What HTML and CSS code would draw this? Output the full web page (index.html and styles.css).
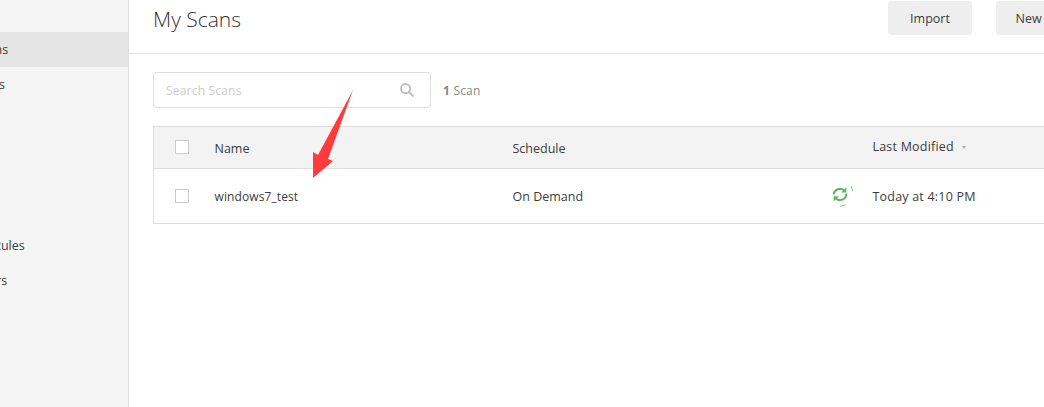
FILE: index.html
```html
<!DOCTYPE html>
<html lang="en">
<head>
    <meta charset="UTF-8">
    <title>My Scans</title>
    <link rel="stylesheet" href="styles.css">
</head>
<body>
    <div class="page">
        <div class="sidebar">
            <div class="side-group">
                <div class="side-item active">My Scans</div>
                <div class="side-item">All Scans</div>
            </div>
            <div class="side-group">
                <div class="side-item">Plugin Rules</div>
                <div class="side-item">Scanners</div>
            </div>
        </div>
        <div class="main">
            <div class="header">
                <h1>My Scans</h1>
                <div class="actions">
                    <button class="btn">Import</button>
                    <button class="btn btn-new">New Scan</button>
                </div>
            </div>
            <div class="content">
                <div class="toolbar">
                    <div class="search">
                        <span class="placeholder">Search Scans</span>
                        <svg class="search-icon" width="14" height="14" viewBox="0 0 14 14" fill="none" stroke="#bcbcbc" stroke-width="1.8">
                            <circle cx="5.6" cy="5.6" r="4.6"/>
                            <path d="M9 9l4.3 4.3"/>
                        </svg>
                    </div>
                    <div class="count"><strong>1</strong> Scan</div>
                </div>
                <table class="scans">
                    <thead>
                        <tr>
                            <th class="col-check raised"><span class="checkbox"></span></th>
                            <th class="col-name lowered">Name</th>
                            <th class="col-schedule lowered">Schedule</th>
                            <th class="col-status"></th>
                            <th class="col-modified raised">Last Modified<span class="caret"></span></th>
                        </tr>
                    </thead>
                    <tbody>
                        <tr>
                            <td class="col-check"><span class="checkbox"></span></td>
                            <td class="col-name scan-name">windows7_test</td>
                            <td class="col-schedule">On Demand</td>
                            <td class="col-status">
                                <svg width="24" height="26" viewBox="0 0 24 26" fill="none" stroke="#5cb85c">
                                    <path d="M2.6 11.5a6.4 6.4 0 0 1 10.6-4" stroke-width="2"/>
                                    <path d="M15.4 10.5a6.4 6.4 0 0 1-10.6 5" stroke-width="2"/>
                                    <path d="M15.4 4.2v5.2h-5.2z" fill="#5cb85c" stroke="none"/>
                                    <path d="M2.6 18.4v-5.2h5.2z" fill="#5cb85c" stroke="none"/>
                                    <path d="M20.2 3l1.6 5" stroke-width="1" opacity="0.8"/>
                                    <path d="M9.5 23.6l5.5-2" stroke-width="1" opacity="0.8"/>
                                </svg>
                            </td>
                            <td class="col-modified">Today at 4:10 PM</td>
                        </tr>
                    </tbody>
                </table>
            </div>
        </div>
    </div>
    <!-- red arrow annotation drawn over the screenshot -->
    <svg class="arrow" width="60" height="100" viewBox="0 0 60 100">
        <path d="M43 0L18 69L23 71L3 88L3 62L8 65Z" fill="#ff3b3b"/>
    </svg>
</body>
</html>
```

FILE: styles.css
```css
html, body {
    margin: 0;
    height: 100%;
    overflow: hidden;
}

body {
    position: relative;
    font-family: "Open Sans", sans-serif;
    font-size: 12.5px;
    color: #3c3c3c;
    background-color: #fff;
}

.page {
    display: flex;
    height: 407px;
    width: 1200px;
}

.sidebar {
    width: 128px;
    flex-shrink: 0;
    padding-top: 32px;
    background-color: #f5f5f5;
    border-right: 1px solid #dedede;
    overflow: hidden;
}

.side-group {
    margin-bottom: 126px;
}

.side-item {
    height: 35px;
    line-height: 35px;
    text-indent: -46px;
    white-space: nowrap;
}

.side-item.active {
    background-color: #e4e4e4;
}

.main {
    flex: 1;
}

.header {
    display: flex;
    justify-content: space-between;
    height: 53px;
    padding-left: 24px;
    border-bottom: 1px solid #e3e3e3;
}

h1 {
    margin: 2px 0 0;
    font-size: 21px;
    font-weight: 300;
    line-height: 34px;
    color: #333;
}

.actions {
    display: flex;
    gap: 24px;
    padding-top: 1px;
    margin-right: 108px;
}

.btn {
    width: 84px;
    height: 34px;
    border: none;
    border-radius: 3px;
    background-color: #eee;
    color: #3c3c3c;
    font-family: inherit;
    font-size: 12.5px;
}

.btn-new {
    width: 96px;
}

.content {
    padding: 18px 0 0 24px;
}

.toolbar {
    display: flex;
    align-items: center;
    gap: 12px;
    margin-bottom: 18px;
}

.search {
    display: flex;
    align-items: center;
    justify-content: space-between;
    box-sizing: border-box;
    width: 278px;
    height: 36px;
    padding: 0 16px 0 12px;
    border: 1px solid #dedede;
    border-radius: 3px;
}

.placeholder {
    color: #ccc;
    font-size: 12px;
    letter-spacing: 0.2px;
}

.count {
    color: #888;
    font-size: 12px;
    letter-spacing: 0.2px;
}

.scans {
    width: 920px;
    border-collapse: collapse;
    table-layout: fixed;
}

.scans th, .scans td {
    box-sizing: border-box;
    padding: 0;
    text-align: left;
    font-weight: 400;
    border-top: 1px solid #dedede;
    border-bottom: 1px solid #dedede;
}

.scans th {
    height: 42px;
    background-color: #f3f3f3;
}

.scans td {
    height: 55px;
}

.scans .col-check {
    width: 60px;
    border-left: 1px solid #dedede;
    padding-left: 21px;
}

.scans th.raised {
    padding-bottom: 2px;
}

.scans th.lowered {
    padding-top: 2px;
}

.scans .col-name {
    width: 299px;
    padding-left: 1px;
}

.scan-name {
    font-size: 12px;
    letter-spacing: 0.1px;
}

.col-schedule {
    width: 314px;
}

.col-status {
    width: 46px;
}

.col-status svg {
    display: block;
    margin-left: 4px;
}

.col-modified {
    letter-spacing: 0.2px;
}

.checkbox {
    display: block;
    box-sizing: border-box;
    width: 14px;
    height: 14px;
    border: 1px solid #ccc;
    background-color: #fff;
}

.caret {
    display: inline-block;
    margin-left: 8px;
    border-left: 2px solid transparent;
    border-right: 2px solid transparent;
    border-top: 3px solid #aaa;
    vertical-align: middle;
}

.arrow {
    position: absolute;
    left: 310px;
    top: 90px;
}
```
